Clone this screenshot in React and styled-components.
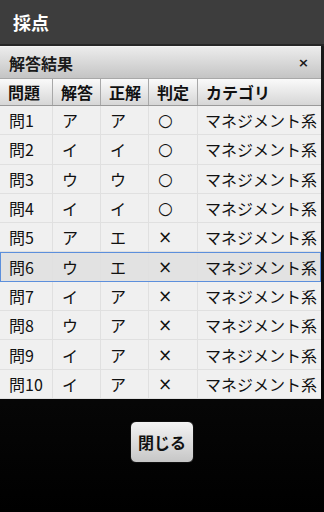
import styled, { createGlobalStyle } from "styled-components";

const GlobalStyle = createGlobalStyle`
    html, body {
        margin: 0;
        padding: 0;
        width: 324px;
        height: 512px;
        overflow: hidden;
        background: #000;
    }
    * {
        box-sizing: border-box;
    }
`;

const font = `"Noto Sans CJK JP", "Noto Sans", sans-serif`;

const results = [
    { no: "問1", answer: "ア", correct: "ア", mark: "○" },
    { no: "問2", answer: "イ", correct: "イ", mark: "○" },
    { no: "問3", answer: "ウ", correct: "ウ", mark: "○" },
    { no: "問4", answer: "イ", correct: "イ", mark: "○" },
    { no: "問5", answer: "ア", correct: "エ", mark: "×" },
    { no: "問6", answer: "ウ", correct: "エ", mark: "×", selected: true },
    { no: "問7", answer: "イ", correct: "ア", mark: "×" },
    { no: "問8", answer: "ウ", correct: "ア", mark: "×" },
    { no: "問9", answer: "イ", correct: "ア", mark: "×" },
    { no: "問10", answer: "イ", correct: "ア", mark: "×" },
];

const App = () => {
    return (
        <Screen>
            <GlobalStyle />
            <TitleBar>採点</TitleBar>
            <Panel>
                <PanelHeader>
                    <span>解答結果</span>
                    <CloseMark>×</CloseMark>
                </PanelHeader>
                <HeadRow>
                    <HeadCell>問題</HeadCell>
                    <HeadCell>解答</HeadCell>
                    <HeadCell>正解</HeadCell>
                    <HeadCell>判定</HeadCell>
                    <HeadCell>カテゴリ</HeadCell>
                </HeadRow>
                {results.map((r) => (
                    <Row key={r.no} $selected={r.selected}>
                        <Cell>{r.no}</Cell>
                        <Cell>{r.answer}</Cell>
                        <Cell>{r.correct}</Cell>
                        <MarkCell>{r.mark}</MarkCell>
                        <Cell>マネジメント系</Cell>
                    </Row>
                ))}
            </Panel>
            <Footer>
                <CloseButton>閉じる</CloseButton>
            </Footer>
        </Screen>
    );
};

export default App;

const Screen = styled.div`
    width: 324px;
    height: 512px;
    display: flex;
    flex-direction: column;
    font-family: ${font};
    background: linear-gradient(#1c1c1c, #000);
`;

const TitleBar = styled.div`
    height: 46px;
    padding: 9px 0 0 13px;
    background: #3d3d3d;
    border-bottom: 2px solid #262626;
    color: #fff;
    font-size: 18px;
    font-weight: bold;
    line-height: 26px;
`;

const Panel = styled.div`
    width: 321px;
    display: flex;
    flex-direction: column;
    background: #f0f0f0;
`;

const PanelHeader = styled.div`
    height: 32px;
    display: flex;
    align-items: center;
    justify-content: space-between;
    padding: 0 12px 0 9px;
    background: linear-gradient(#ececec, #c4c4c4);
    border-top: 1px solid #f4f4f4;
    color: #1a1a1a;
    font-size: 16px;
    font-weight: bold;
`;

const CloseMark = styled.span`
    font-family: "DejaVu Sans", sans-serif;
    font-size: 13px;
    font-weight: bold;
`;

const grid = `
    display: grid;
    grid-template-columns: 52px 48px 48px 49px 1fr;
`;

const HeadRow = styled.div`
    ${grid}
    height: 28px;
    background: linear-gradient(#fafafa, #d6d6d6);
    border-top: 1px solid #a8a8a8;
    border-bottom: 1px solid #9a9a9a;
`;

const HeadCell = styled.div`
    display: flex;
    align-items: center;
    padding-left: 8px;
    border-left: 1px solid #a8a8a8;
    color: #111;
    font-size: 16px;
    font-weight: bold;
    &:first-child {
        border-left: none;
    }
`;

const Row = styled.div`
    ${grid}
    height: 29.3px;
    background: ${(p) => (p.$selected ? "#e2e2e2" : "#f0f0f0")};
    border-bottom: 1px solid ${(p) => (p.$selected ? "#5c8fdc" : "#e0e0e0")};
    outline: ${(p) => (p.$selected ? "1px solid #5c8fdc" : "none")};
    outline-offset: -1px;
`;

const Cell = styled.div`
    display: flex;
    align-items: center;
    padding-left: 9px;
    border-left: 1px solid #e0e0e0;
    color: #111;
    font-size: 16px;
    white-space: nowrap;
    &:first-child {
        border-left: none;
    }
    &:last-child {
        padding-left: 7px;
    }
`;

const MarkCell = styled(Cell)`
    padding-left: 9px;
    font-family: "DejaVu Sans", sans-serif;
    font-size: 17px;
`;

const Footer = styled.div`
    flex: 1;
    display: flex;
    justify-content: center;
    padding-top: 22px;
`;

const CloseButton = styled.button`
    width: 64px;
    height: 42px;
    border: 1px solid #111;
    border-radius: 6px;
    background: linear-gradient(#f4f4f4, #c6c6c6);
    color: #111;
    font-family: ${font};
    font-size: 16px;
    font-weight: bold;
    padding: 0;
`;
